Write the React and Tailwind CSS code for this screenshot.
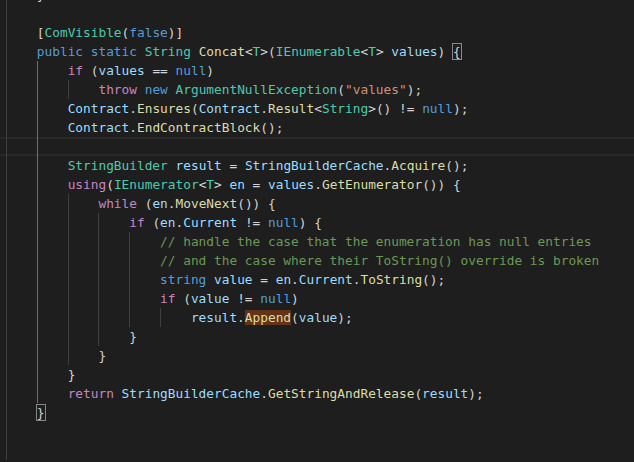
import React from 'react';

const colors = {
  k: 'text-[#569cd6]',
  c: 'text-[#c586c0]',
  t: 'text-[#4ec9b0]',
  f: 'text-[#dcdcaa]',
  v: 'text-[#9cdcfe]',
  s: 'text-[#ce9178]',
  m: 'text-[#6a9955]',
  p: 'text-[#d4d4d4]',
  h: 'text-[#dcdcaa] bg-[#623314]',
  b: 'text-[#d4d4d4] outline outline-1 outline-[#888888]',
};

// n = number of indent levels, a = method block guide is active
const lines = [
  { n: 1, t: [['}', 'p']] },
  { n: 1, t: [] },
  { n: 1, t: [['[', 'p'], ['ComVisible', 't'], ['(', 'p'], ['false', 'k'], [')]', 'p']] },
  {
    n: 1,
    t: [
      ['public static ', 'k'], ['String', 't'], [' ', 'p'], ['Concat', 'f'], ['<', 'p'], ['T', 't'], ['>(', 'p'],
      ['IEnumerable', 't'], ['<', 'p'], ['T', 't'], ['> ', 'p'], ['values', 'v'], [') ', 'p'], ['{', 'b'],
    ],
  },
  { n: 2, a: 1, t: [['if', 'c'], [' (', 'p'], ['values', 'v'], [' == ', 'p'], ['null', 'k'], [')', 'p']] },
  {
    n: 3,
    a: 1,
    t: [['throw', 'c'], [' ', 'p'], ['new', 'k'], [' ', 'p'], ['ArgumentNullException', 't'], ['(', 'p'], ['"values"', 's'], [');', 'p']],
  },
  {
    n: 2,
    a: 1,
    t: [
      ['Contract', 'v'], ['.', 'p'], ['Ensures', 'f'], ['(', 'p'], ['Contract', 'v'], ['.', 'p'], ['Result', 'f'],
      ['<', 'p'], ['String', 't'], ['>() != ', 'p'], ['null', 'k'], [');', 'p'],
    ],
  },
  { n: 2, a: 1, t: [['Contract', 'v'], ['.', 'p'], ['EndContractBlock', 'f'], ['();', 'p']] },
  { n: 2, a: 1, cur: true, t: [] },
  {
    n: 2,
    a: 1,
    t: [
      ['StringBuilder', 't'], [' ', 'p'], ['result', 'v'], [' = ', 'p'], ['StringBuilderCache', 'v'], ['.', 'p'],
      ['Acquire', 'f'], ['();', 'p'],
    ],
  },
  {
    n: 2,
    a: 1,
    t: [
      ['using', 'c'], ['(', 'p'], ['IEnumerator', 't'], ['<', 'p'], ['T', 't'], ['> ', 'p'], ['en', 'v'], [' = ', 'p'],
      ['values', 'v'], ['.', 'p'], ['GetEnumerator', 'f'], ['()) {', 'p'],
    ],
  },
  { n: 3, a: 1, t: [['while', 'c'], [' (', 'p'], ['en', 'v'], ['.', 'p'], ['MoveNext', 'f'], ['()) {', 'p']] },
  {
    n: 4,
    a: 1,
    t: [['if', 'c'], [' (', 'p'], ['en', 'v'], ['.', 'p'], ['Current', 'v'], [' != ', 'p'], ['null', 'k'], [') {', 'p']],
  },
  { n: 5, a: 1, t: [['// handle the case that the enumeration has null entries', 'm']] },
  { n: 5, a: 1, t: [['// and the case where their ToString() override is broken', 'm']] },
  {
    n: 5,
    a: 1,
    t: [
      ['string', 'k'], [' ', 'p'], ['value', 'v'], [' = ', 'p'], ['en', 'v'], ['.', 'p'], ['Current', 'v'], ['.', 'p'],
      ['ToString', 'f'], ['();', 'p'],
    ],
  },
  { n: 5, a: 1, t: [['if', 'c'], [' (', 'p'], ['value', 'v'], [' != ', 'p'], ['null', 'k'], [')', 'p']] },
  { n: 6, a: 1, t: [['result', 'v'], ['.', 'p'], ['Append', 'h'], ['(', 'p'], ['value', 'v'], [');', 'p']] },
  { n: 4, a: 1, t: [['}', 'p']] },
  { n: 3, a: 1, t: [['}', 'p']] },
  { n: 2, a: 1, t: [['}', 'p']] },
  {
    n: 2,
    a: 1,
    t: [
      ['return', 'c'], [' ', 'p'], ['StringBuilderCache', 'v'], ['.', 'p'], ['GetStringAndRelease', 'f'], ['(', 'p'],
      ['result', 'v'], [');', 'p'],
    ],
  },
  { n: 1, t: [['}', 'b']] },
  { n: 1, t: [] },
  { n: 1, t: [] },
];

const Guide = ({ active }) => (
  <span
    className={
      active
        ? 'inline-block h-[19px] w-[4ch] align-top border-l border-[#707070]'
        : 'inline-block h-[19px] w-[4ch] align-top border-l border-[#404040]'
    }
  />
);

const CodeLine = ({ line }) => {
  const guides = [];
  for (let i = 0; i < line.n; i++) {
    guides.push(<Guide key={i} active={i === 1 && line.a} />);
  }

  return (
    <div
      className={
        line.cur
          ? 'h-[19px] whitespace-pre shadow-[inset_0_2px_0_#282828,inset_0_-2px_0_#282828]'
          : 'h-[19px] whitespace-pre'
      }
    >
      <span className="pl-[6px]" />
      {guides}
      {line.t.map(([text, kind], i) => (
        <span key={i} className={colors[kind]}>
          {text}
        </span>
      ))}
    </div>
  );
};

const App = () => {
  return (
    <div className="w-full h-screen overflow-hidden bg-[#1e1e1e] font-['DejaVu_Sans_Mono',monospace] text-[12.8px] leading-[19px] text-[#d4d4d4]">
      <div className="mt-[-15px]">
        {lines.map((line, i) => (
          <CodeLine key={i} line={line} />
        ))}
      </div>
    </div>
  );
};

export default App;
